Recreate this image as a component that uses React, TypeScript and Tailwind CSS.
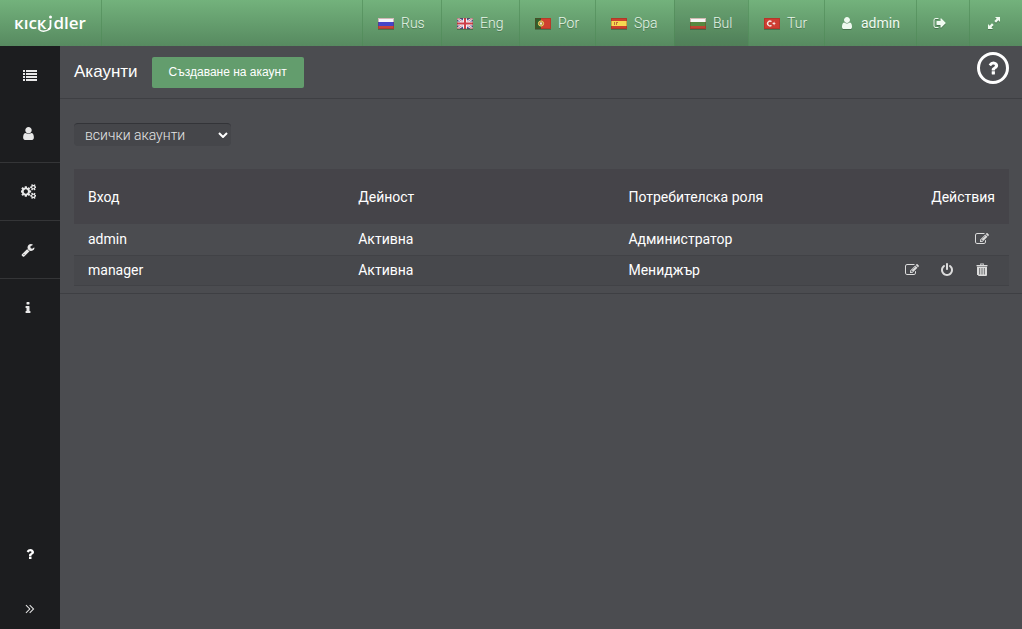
import React from "react";

const paths = {
  user: "M1536 1399q0 109-62.5 187t-150.5 78h-854q-88 0-150.5-78t-62.5-187q0-85 8.5-160.5t31.5-152 58.5-131 94-89 134.5-34.5q131 128 313 128t313-128q76 0 134.5 34.5t94 89 58.5 131 31.5 152 8.5 160.5zm-256-887q0 159-112.5 271.5t-271.5 112.5-271.5-112.5-112.5-271.5 112.5-271.5 271.5-112.5 271.5 112.5 112.5 271.5z",
  edit: "M888 1184l116-116-152-152-116 116v56h96v96h56zm440-720q-16-16-33 1l-350 350q-17 17-1 33t33-1l350-350q17-17 1-33zm80 594v190q0 119-84.5 203.5t-203.5 84.5h-832q-119 0-203.5-84.5t-84.5-203.5v-832q0-119 84.5-203.5t203.5-84.5h832q63 0 117 25 15 7 18 23 3 17-9 29l-49 49q-14 14-32 8-23-6-45-6h-832q-66 0-113 47t-47 113v832q0 66 47 113t113 47h832q66 0 113-47t47-113v-126q0-13 9-22l64-64q15-15 35-7t20 29zm-96-738l288 288-672 672h-288v-288zm444 132l-92 92-288-288 92-92q28-28 68-28t68 28l152 152q28 28 28 68t-28 68z",
  power: "M1664 896q0 156-61 298t-164 245-245 164-298 61-298-61-245-164-164-245-61-298q0-182 80.5-343t226.5-270q43-32 95.5-25t83.5 50q32 42 24.5 94.5t-49.5 84.5q-98 74-151.5 181t-53.5 228q0 104 40.5 198.5t109.5 163.5 163.5 109.5 198.5 40.5 198.5-40.5 163.5-109.5 109.5-163.5 40.5-198.5q0-121-53.5-228t-151.5-181q-42-32-49.5-84.5t24.5-94.5q31-43 84-50t95 25q146 109 226.5 270t80.5 343zm-640-768v640q0 52-38 90t-90 38-90-38-38-90v-640q0-52 38-90t90-38 90 38 38 90z",
  trash: "M192 256h448v-128q0-64 64-64h384q64 0 64 64v128h448v160h-1408zM704 256h384v-80h-384zM256 480h1280v1056q0 128-128 128h-896q-128 0-128-128h-128zM560 640v832h96v-832zM848 640v832h96v-832zM1136 640v832h96v-832z",
  wrench: "M448 1472q0-26-19-45t-45-19-45 19-19 45 19 45 45 19 45-19 19-45zm644-420l-682 682q-37 37-90 37-52 0-91-37l-106-108q-38-36-38-90 0-53 38-91l681-681q39 98 114.5 173.5t173.5 114.5zm634-435q0 39-23 106-47 134-164.5 217.5t-258.5 83.5q-185 0-316.5-131.5t-131.5-316.5 131.5-316.5 316.5-131.5q58 0 121.5 16.5t107.5 46.5q16 11 16 28t-16 28l-293 169v224l193 107q5-3 79-48.5t135.5-81 70.5-35.5q15 0 23.5 10t8.5 25z",
  cogs: "M832 896q0-106-75-181t-181-75-181 75-75 181 75 181 181 75 181-75 75-181zm768 512q0-52-38-90t-90-38-90 38-38 90q0 53 37.5 90.5t90.5 37.5 90.5-37.5 37.5-90.5zm0-1024q0-52-38-90t-90-38-90 38-38 90q0 53 37.5 90.5t90.5 37.5 90.5-37.5 37.5-90.5zm-384 421v185q0 10-7 19.5t-16 10.5l-155 24q-11 35-32 76 34 48 90 115 7 11 7 20 0 12-7 19-23 30-82.5 89.5t-78.5 59.5q-11 0-21-7l-115-90q-37 19-77 31-11 108-23 155-7 24-30 24h-186q-11 0-20-7.5t-10-17.5l-23-153q-34-10-75-31l-118 89q-7 7-20 7-11 0-21-8-144-133-144-160 0-9 7-19 10-14 41-53t47-61q-23-44-35-82l-152-24q-10-1-17-9.5t-7-19.5v-185q0-10 7-19.5t16-10.5l155-24q11-35 32-76-34-48-90-115-7-11-7-20 0-12 7-20 22-30 82-89t79-59q11 0 21 7l115 90q34-18 77-32 11-108 23-154 7-24 30-24h186q11 0 20 7.5t10 17.5l23 153q34 10 75 31l118-89q8-7 20-7 11 0 21 8 144 133 144 160 0 8-7 19-12 16-42 54t-45 60q23 48 34 82l152 23q10 2 17 10.5t7 19.5zm640 533v140q0 16-149 31-12 27-30 52 51 113 51 138 0 4-4 7-122 71-124 71-8 0-46-47t-52-68q-20 2-30 2t-30-2q-14 21-52 68t-46 47q-2 0-124-71-4-3-4-7 0-25 51-138-18-25-30-52-149-15-149-31v-140q0-16 149-31 13-29 30-52-51-113-51-138 0-4 4-7 4-2 35-20t59-34 30-16q8 0 46 46.5t52 67.5q20-2 30-2t30 2q51-71 92-112l6-2q4 0 124 70 4 3 4 7 0 25-51 138 17 23 30 52 149 15 149 31zm0-1024v140q0 16-149 31-12 27-30 52 51 113 51 138 0 4-4 7-122 71-124 71-8 0-46-47t-52-68q-20 2-30 2t-30-2q-14 21-52 68t-46 47q-2 0-124-71-4-3-4-7 0-25 51-138-18-25-30-52-149-15-149-31v-140q0-16 149-31 13-29 30-52-51-113-51-138 0-4 4-7 4-2 35-20t59-34 30-16q8 0 46 46.5t52 67.5q20-2 30-2t30 2q51-71 92-112l6-2q4 0 124 70 4 3 4 7 0 25-51 138 17 23 30 52 149 15 149 31z",
  signOut: "M704 1440q0 4 1 20t.5 26.5-3 23.5-10 19.5-20.5 6.5h-320q-119 0-203.5-84.5t-84.5-203.5v-704q0-119 84.5-203.5t203.5-84.5h320q13 0 22.5 9.5t9.5 22.5q0 4 1 20t.5 26.5-3 23.5-10 19.5-20.5 6.5h-320q-66 0-113 47t-47 113v704q0 66 47 113t113 47h312l11.5 1 11.5 3 8 5.5 7 9 2 13.5zm928-544q0 26-19 45l-544 544q-19 19-45 19t-45-19-19-45v-288h-448q-26 0-45-19t-19-45v-384q0-26 19-45t45-19h448v-288q0-26 19-45t45-19 45 19l544 544q19 19 19 45z",
  info: "M1216 1344v128q0 26-19 45t-45 19h-512q-26 0-45-19t-19-45v-128q0-26 19-45t45-19h64v-384h-64q-26 0-45-19t-19-45v-128q0-26 19-45t45-19h384q26 0 45 19t19 45v576h64q26 0 45 19t19 45zm-128-1152v192q0 26-19 45t-45 19h-256q-26 0-45-19t-19-45v-192q0-26 19-45t45-19h256q26 0 45 19t19 45z",
  question: "M1088 1256v240q0 16-12 28t-28 12h-240q-16 0-28-12t-12-28v-240q0-16 12-28t28-12h240q16 0 28 12t12 28zm316-600q0 54-15.5 101t-35 76.5-55 59.5-57.5 43.5-61 35.5q-41 23-68.5 65t-27.5 67q0 17-12 32.5t-28 15.5h-240q-15 0-25.5-18.5t-10.5-37.5v-45q0-83 65-156.5t143-108.5q59-27 84-56t25-76q0-42-46.5-74t-107.5-32q-65 0-108 29-35 25-107 115-13 16-31 16-12 0-25-8l-164-125q-13-10-15.5-25t5.5-28q160-266 464-266 80 0 161 31t146 83 106 127.5 41 158.5z",
  list: "M0 256h256v256H0zM384 256h1408v256H384zM0 640h256v256H0zM384 640h1408v256H384zM0 1024h256v256H0zM384 1024h1408v256H384zM0 1408h256v256H0zM384 1408h1408v256H384z",
  expand: "M1024 128h640v640l-210-210-300 300-220-220 300-300zM768 1664h-640v-640l210 210 300-300 220 220-300 300z",
  chevrons: "M330 448l90-90 540 538-540 538-90-90 448-448zM810 448l90-90 540 538-540 538-90-90 448-448z",
};

type IconName = keyof typeof paths;

function Icon({ name, className = "size-3.5" }: { name: IconName; className?: string }) {
  return (
    <svg viewBox="0 0 1792 1792" className={className} fill="currentColor" fillRule={name === "trash" ? "evenodd" : "nonzero"} aria-hidden="true">
      <path d={paths[name]} />
    </svg>
  );
}

function Flag({ code }: { code: string }) {
  return (
    <svg viewBox="0 0 16 11" className="h-[11px] w-4 shrink-0" aria-hidden="true">
      {code === "Rus" && (
        <>
          <path fill="#f4f4f8" d="M0 0h16v4H0z" />
          <path fill="#4545c8" d="M0 4h16v4H0z" />
          <path fill="#c8453a" d="M0 8h16v3H0z" />
        </>
      )}
      {code === "Eng" && (
        <>
          <path fill="#44528f" d="M0 0h16v11H0z" />
          <path stroke="#f0eef4" strokeWidth="2.4" d="M0 0l16 11M16 0L0 11" />
          <path stroke="#c9636b" strokeWidth=".8" d="M0 0l16 11M16 0L0 11" />
          <path fill="#f4f0f4" d="M6 0h4v11H6zM0 3.5h16v4H0z" />
          <path fill="#cf3f48" d="M7 0h2v11H7zM0 4.5h16v2H0z" />
        </>
      )}
      {code === "Por" && (
        <>
          <path fill="#d0402f" d="M0 0h16v11H0z" />
          <path fill="#315f2b" d="M0 0h6v11H0z" />
          <circle cx="6" cy="5.5" r="2.6" fill="#b8823a" stroke="#ead768" />
          <path fill="#e8e8e0" d="M5 4.5h2v2H5z" />
        </>
      )}
      {code === "Spa" && (
        <>
          <path fill="#c9402e" d="M0 0h16v11H0z" />
          <path fill="#f6d851" d="M0 3h16v5H0z" />
          <path fill="#bd6a3c" d="M3 4h1v3H3zM5 4h2v1H6v2H5z" />
        </>
      )}
      {code === "Bul" && (
        <>
          <path fill="#f6f6f4" d="M0 0h16v4H0z" />
          <path fill="#578840" d="M0 4h16v4H0z" />
          <path fill="#bf4634" d="M0 8h16v3H0z" />
        </>
      )}
      {code === "Tur" && (
        <>
          <path fill="#ce3c31" d="M0 0h16v11H0z" />
          <path fill="none" stroke="#f6e8e4" strokeWidth="1.4" d="M7.5 3.6a2.4 2.4 0 1 0 0 3.8" />
          <path fill="#f6e8e4" d="M8 5l1.5-.2.8-1.3.3 1.4 1.4.6-1.4.6-.3 1.4-.8-1.3z" />
        </>
      )}
      <path d="M.5.5h15v10H.5z" fill="none" stroke="#7a2a1c" strokeOpacity=".3" />
    </svg>
  );
}

function Logo() {
  return (
    <span className="flex items-center font-['Open_Sans',sans-serif] text-[17px] leading-5 font-semibold text-white">
      <span>кıcк</span>
      <svg viewBox="0 0 7 20" className="h-5 w-[7px] overflow-visible" aria-hidden="true">
        <circle cx="3.5" cy="4" r="1.5" fill="white" />
        <path d="M3.5 7v6q0 3-2.500 3.500" fill="none" stroke="white" strokeWidth="1.8" />
        <path d="M-8 16.500q5 4 11-1" fill="none" stroke="white" strokeWidth="1.400" strokeLinecap="round" />
      </svg>
      <span>dler</span>
    </span>
  );
}

const languages = [
  { code: "Rus", width: "w-[79px]" },
  { code: "Eng", width: "w-[78px]" },
  { code: "Por", width: "w-[76px]" },
  { code: "Spa", width: "w-[79px]" },
  { code: "Bul", width: "w-[74px]" },
  { code: "Tur", width: "w-[76px]" },
];

const sections: { icon: IconName; label: string }[] = [
  { icon: "user", label: "Акаунти" },
  { icon: "cogs", label: "Настройки" },
  { icon: "wrench", label: "Инструменти" },
  { icon: "info", label: "Информация" },
];

const accounts: { login: string; status: string; role: string; actions: { icon: IconName; label: string }[] }[] = [
  {
    login: "admin",
    status: "Активна",
    role: "Администратор",
    actions: [{ icon: "edit", label: "Редактиране" }],
  },
  {
    login: "manager",
    status: "Активна",
    role: "Мениджър",
    actions: [
      { icon: "edit", label: "Редактиране" },
      { icon: "power", label: "Изключване" },
      { icon: "trash", label: "Изтриване" },
    ],
  },
];

const topItem = "flex items-center border-l border-[#4f8a57]/60 [&_svg]:drop-shadow-[0_1px_0_rgba(0,0,0,0.25)]";

export default function App() {
  return (
    <div className="flex min-h-screen flex-col bg-[#4b4c50] font-[Roboto,sans-serif] text-sm text-white">
      <header className="flex h-[46px] justify-between bg-linear-to-b from-[#73b27c] to-[#578a60]">
        <a href="#home" aria-label="Kickidler" className="flex w-[102px] items-center border-r border-[#4f8a57]/60 pl-3.5">
          <Logo />
        </a>
        <nav className="flex text-shadow-[0_1px_0_rgba(0,0,0,0.25)]">
          {languages.map(({ code, width }) => (
            <a
              key={code}
              href={`#${code}`}
              className={`${topItem} ${width} gap-[7px] pl-[15px] font-light text-[#e6f6e8] ${code === "Bul" ? "bg-black/8" : ""}`}
            >
              <Flag code={code} />
              {code}
            </a>
          ))}
          <a href="#profile" className={`${topItem} w-[92px] gap-[7px] pl-[15px] text-[#effaf0]`}>
            <Icon name="user" />
            admin
          </a>
          <button type="button" aria-label="Изход" className={`${topItem} w-[53px] justify-center pr-1.5 text-[#effaf0]`}>
            <Icon name="signOut" />
          </button>
          <button type="button" aria-label="Цял екран" className={`${topItem} w-[53px] justify-center pr-1 text-[#effaf0]`}>
            <Icon name="expand" />
          </button>
        </nav>
      </header>

      <div className="flex flex-1">
        <aside className="flex w-[60px] shrink-0 flex-col bg-[#1c1d1f] text-[#e8e8e8]">
          <button type="button" aria-label="Меню" className="flex h-[58px] items-center justify-center">
            <Icon name="list" />
          </button>
          <nav>
            {sections.map(({ icon, label }) => (
              <a
                key={icon}
                href={`#${icon}`}
                aria-label={label}
                className="flex h-[58px] items-center justify-center border-t border-[#343537] pr-1 first:border-transparent"
              >
                <Icon name={icon} className={icon === "user" || icon === "cogs" ? "size-[15px]" : "size-3.5"} />
              </a>
            ))}
          </nav>
          <a href="#help" aria-label="Помощ" className="mt-auto flex h-[70px] items-center justify-center text-white">
            <Icon name="question" />
          </a>
          <button type="button" aria-label="Разгъване" className="flex h-10 items-center justify-center">
            <Icon name="chevrons" className="size-3.5" />
          </button>
        </aside>

        <main className="min-w-0 flex-1">
          <div className="flex h-[53px] items-center border-b border-[#3e3f43] pr-[13px] pl-3.5">
            <h1 className="font-['Liberation_Sans',sans-serif] text-[17px] font-normal">Акаунти</h1>
            <button
              type="button"
              className="ml-3.5 h-[31px] rounded-xs bg-[#639d6d] px-[17px] font-['Liberation_Sans',sans-serif] text-xs"
            >
              Създаване на акаунт
            </button>
            <a
              href="#support"
              aria-label="Помощ за страницата"
              className="mb-2 ml-auto flex size-8 items-center justify-center rounded-full border-3 border-white"
            >
              <Icon name="question" className="size-[18px]" />
            </a>
          </div>

          <div className="border-b border-[#3e3f43] pt-6 pr-[13px] pb-[7px] pl-3.5">
            <div className="relative flex w-[157px]">
              <select
                aria-label="Филтър на акаунти"
                className="h-[23px] w-full appearance-none rounded-sm border-t border-[#333438] bg-[#45464a] pl-[11px] text-sm font-light text-[#e6e6e6]"
              >
                <option>всички акаунти</option>
              </select>
              <svg viewBox="0 0 10 6" className="pointer-events-none absolute top-[9px] right-[3px] h-1.5 w-2.5" aria-hidden="true">
                <path d="M1 1l4 4 4-4" fill="none" stroke="white" strokeWidth="2" />
              </svg>
            </div>

            <table className="mt-[23px] w-full table-fixed border-collapse text-left">
              <colgroup>
                <col className="w-[28.9%]" />
                <col className="w-[28.9%]" />
                <col className="w-[21%]" />
                <col />
              </colgroup>
              <thead>
                <tr className="h-[55px] bg-[#454449]">
                  <th className="px-3.5 font-normal">Вход</th>
                  <th className="px-3.5 font-normal">Дейност</th>
                  <th className="px-3.5 font-normal whitespace-nowrap">Потребителска роля</th>
                  <th className="px-3.5 text-right font-normal">Действия</th>
                </tr>
              </thead>
              <tbody>
                {accounts.map(({ login, status, role, actions }) => (
                  <tr key={login} className="h-[31px] border-b border-[#414246] even:h-[30px] even:bg-[#47484c]">
                    <td className="px-3.5">{login}</td>
                    <td className="px-3.5">{status}</td>
                    <td className="px-3.5">{role}</td>
                    <td className="px-5">
                      <div className="flex justify-end gap-[21px] text-[#dcdcdc]">
                        {actions.map(({ icon, label }) => (
                          <button key={icon} type="button" aria-label={label}>
                            <Icon name={icon} />
                          </button>
                        ))}
                      </div>
                    </td>
                  </tr>
                ))}
              </tbody>
            </table>
          </div>
        </main>
      </div>
    </div>
  );
}
